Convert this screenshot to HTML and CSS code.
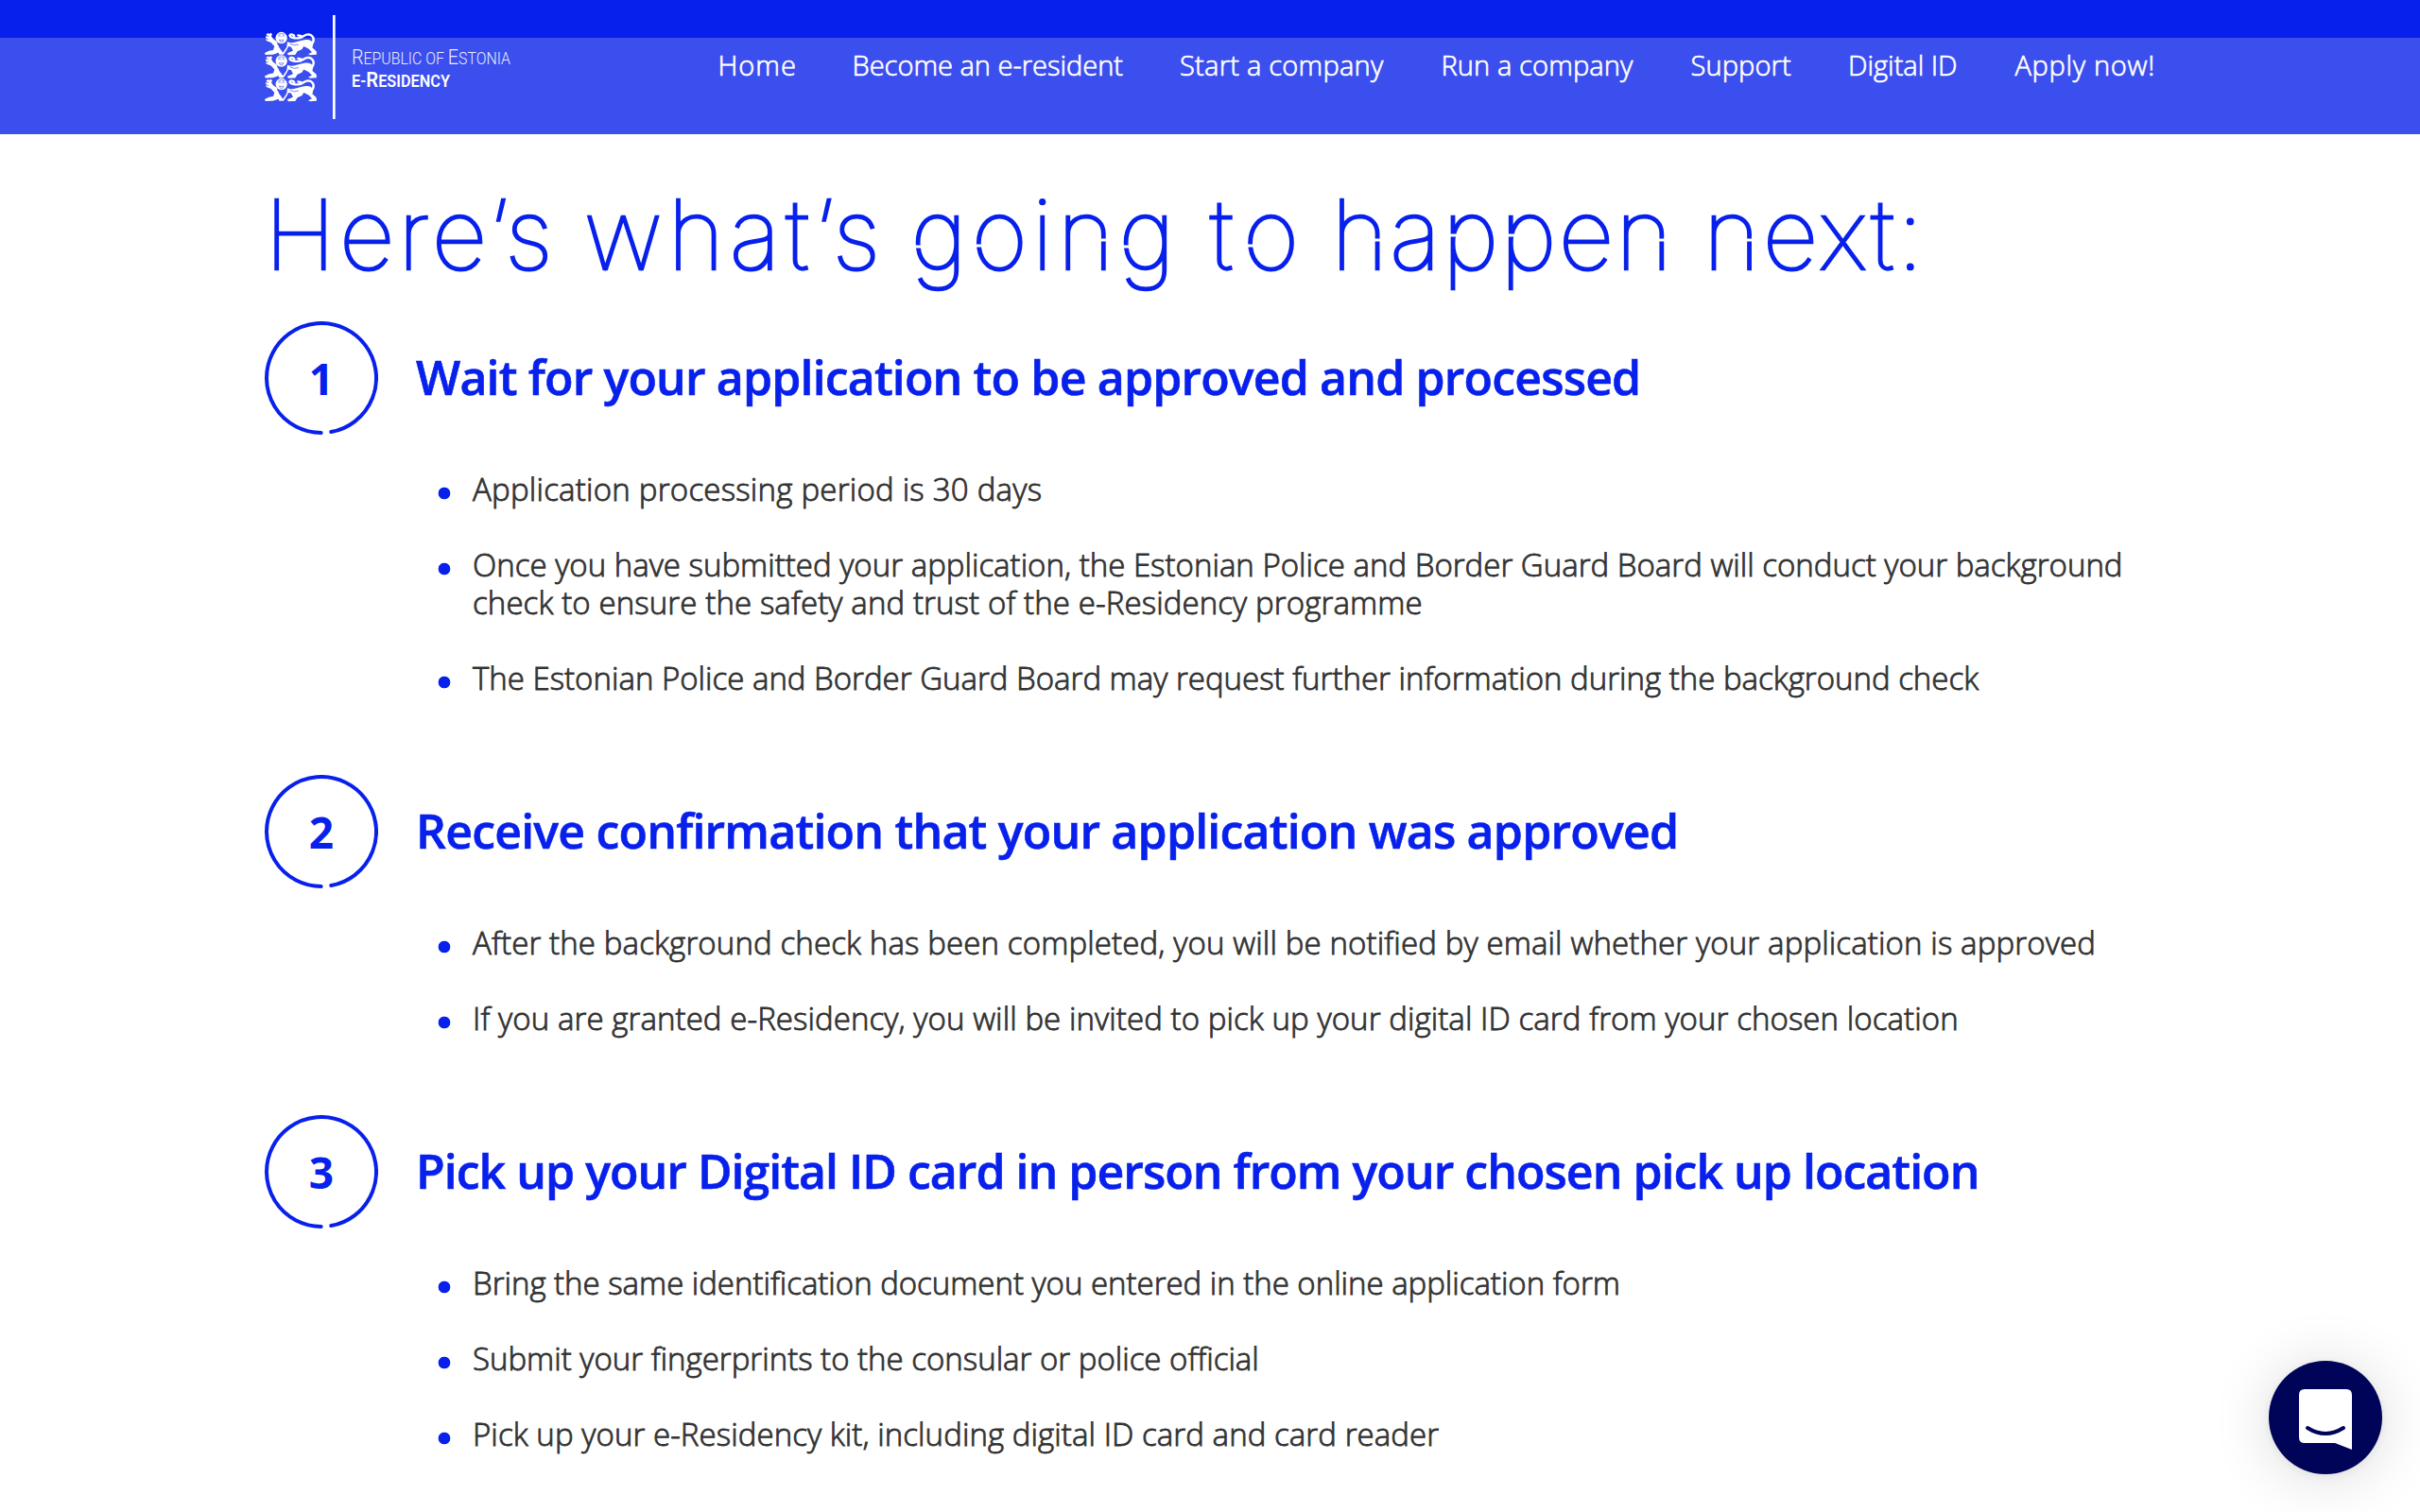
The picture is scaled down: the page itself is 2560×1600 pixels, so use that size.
FILE: index.html
```
<!DOCTYPE html>
<html lang="en">
<head>
<meta charset="utf-8">
<title>e-Residency: what happens next</title>
<link rel="stylesheet" href="styles.css">
</head>
<body>
<header class="header">
  <div class="header-inner">
    <svg class="logo" width="270" height="112" viewBox="0 0 270 112">
      <defs>
        <g id="lion">
          <path fill="#fff" d="M4 9 11 3 14 7 20 3 24 8 21 14 27 23 38 30 46 50 58 66 70 48 72 32C92 40 108 27 130 25 150 23 158 36 151 50L164 62 165 72 145 74 138 71 150 65 140 54 124 46 118 56 104 62 97 73 74 74 72 68 90 60 84 48 76 46 68 60 60 72 46 72 44 66 26 72 2 73 0 67 14 60 27 58 31 46 20 34 5 28 4 23 15 24 3 19 4 13 15 16Z"/>
          <circle cx="53" cy="19" r="18.500" fill="#fff"/>
          <path fill="none" stroke="#fff" stroke-width="7" stroke-linecap="round" d="M152 36C160 22 152 9 138 8 124 8 122 20 106 20 92 20 76 17 80 10 84 6 92 9 94 13M106 11l12 3"/>
          <path fill="none" stroke="#3b4eee" stroke-width="2" d="M43 14q5-4 8 0M55 14q4-4 8 0M43 8q10-5 21 0M46 24q1 7 7 9 7-2 7-9M49 26h8M39 38q12 6 26 1M80 38q14 8 28 2"/>
        </g>
      </defs>
      <g transform="translate(0 17.700) scale(.3333)">
        <use href="#lion"/><use href="#lion" y="73.500"/><use href="#lion" y="147"/>
      </g>
      <rect x="72" width="2.700" height="110" fill="#fff"/>
      <g fill="#fff" class="logo-text">
        <text x="92" y="51.700" class="logo-light" textLength="168" lengthAdjust="spacingAndGlyphs"><tspan class="cap">R</tspan>EPUBLIC OF <tspan class="cap">E</tspan>STONIA</text>
        <text x="92" y="75.700" class="logo-bold" textLength="104" lengthAdjust="spacingAndGlyphs">E-<tspan class="cap">R</tspan>ESIDENCY</text>
      </g>
    </svg>
    <nav class="nav">
      <a class="n1">Home</a><a>Become an e-resident</a><a class="n3">Start a company</a><a class="n4">Run a company</a><a class="n4">Support</a><a>Digital ID</a><a class="n7">Apply now!</a>
    </nav>
  </div>
</header>
<main class="main">
  <h1 class="title">
    <span class="w1">Here’s</span> <span class="w2">what’s</span> <span class="w3">going</span> <span class="w4">to</span> <span class="w5">happen</span> <span class="w6">next:</span>
    <svg class="stencil" viewBox="280 142 2000 198"><path d="M738 254h14M1162 254h14M1450 254h14M1752 254h14M1842 254h14M1026 260h14M963 261h14M1181 261h14M1314 260h14M1529 249h13M1594 249h13"/></svg>
  </h1>

  <section class="step">
    <div class="step-head">
      <div class="num"><svg viewBox="0 0 120 120"><path d="M70.300 117.080A58 58 0 1 0 59.700 118"/></svg><b>1</b></div>
      <h2 class="h1s">Wait for your application to be approved and processed</h2>
    </div>
    <ul>
      <li class="a1">Application processing period is 30 days</li>
      <li><span class="a2">Once you have submitted your application, the Estonian Police and Border Guard Board will conduct your background</span><br><span class="a3">check to ensure the safety and trust of the e-Residency programme</span></li>
      <li>The Estonian Police and Border Guard Board may request further information during the background check</li>
    </ul>
  </section>

  <section class="step">
    <div class="step-head">
      <div class="num"><svg viewBox="0 0 120 120"><path d="M70.300 117.080A58 58 0 1 0 59.700 118"/></svg><b>2</b></div>
      <h2 class="h2s">Receive confirmation that your application was approved</h2>
    </div>
    <ul>
      <li class="a5">After the background check has been completed, you will be notified by email whether your application is approved</li>
      <li class="a6">If you are granted e-Residency, you will be invited to pick up your digital ID card from your chosen location</li>
    </ul>
  </section>

  <section class="step">
    <div class="step-head">
      <div class="num"><svg viewBox="0 0 120 120"><path d="M70.300 117.080A58 58 0 1 0 59.700 118"/></svg><b>3</b></div>
      <h2 class="h3s">Pick up your Digital ID card in person from your chosen pick up location</h2>
    </div>
    <ul>
      <li class="a8">Bring the same identification document you entered in the online application form</li>
      <li>Submit your fingerprints to the consular or police official</li>
      <li class="a7">Pick up your e-Residency kit, including digital ID card and card reader</li>
    </ul>
  </section>
</main>
<button class="chat" aria-label="Open chat">
  <svg width="56" height="64" viewBox="0 0 56 64"><path fill="#fff" d="M6 0H50Q56 0 56 6V64L38 57H6Q0 57 0 51V6Q0 0 6 0Z"/><path fill="none" stroke="#000459" stroke-width="4" stroke-linecap="round" d="M9 41Q28 53 47 41"/></svg>
</button>
</body>
</html>
```
FILE: styles.css
```
* { box-sizing: border-box; margin: 0; padding: 0; }
html, body { height: 1600px; overflow: hidden; }
body { background: #fff; font-family: "Open Sans", "Liberation Sans", sans-serif; color: #333; }

.header { height: 142px; background: linear-gradient(#0820ec 40px, #3b4eee 40px); }
.header-inner { width: 2000px; margin: 0 auto; display: flex; }
.logo { margin-top: 16px; flex: none; }
.logo-text { font-family: Roboto, sans-serif; font-size: 18px; }
.logo-text .cap { font-size: 22.5px; }
.logo-light { font-weight: 300; opacity: .9; }
.logo-bold { font-weight: 600; }

.nav {
  display: grid;
  grid-template-columns: 142px 346.500px 276.500px 264px 166.500px 176.500px auto;
  margin: 51px 0 0 209.500px;
  font-size: 29px;
  font-weight: 300;
  line-height: 36px;
  color: #fff;
  -webkit-text-stroke: .7px #fff;
  white-space: nowrap;
}
.n1 { letter-spacing: 1px; }
.n3 { letter-spacing: .25px; }
.n4 { letter-spacing: .12px; }
.n7 { letter-spacing: .7px; }

.main { width: 2000px; margin: 0 auto; }
.title {
  position: relative;
  display: grid;
  grid-template-columns: 338px 345.500px 313.500px 131.500px 393.500px auto;
  height: 198px;
  padding-top: 44px;
  font-family: Inter, sans-serif;
  font-size: 102px;
  line-height: 124px;
  font-weight: 100;
  color: #0820ec;
  -webkit-text-stroke: 2.5px #0820ec;
  white-space: nowrap;
}
.stencil { position: absolute; inset: 0; width: 2000px; height: 198px; fill: none; stroke: #fff; stroke-width: 3; }
.w1 { letter-spacing: 4px; }
.w2 { letter-spacing: 5.900px; }
.w3 { letter-spacing: 5px; }
.w4 { letter-spacing: 11px; padding-left: 3px; }
.w5 { letter-spacing: 2.150px; }
.w6 { letter-spacing: 3.2px; }

.step { padding-bottom: 80px; }
.step-head { display: flex; align-items: center; gap: 40px; height: 120px; color: #0820ec; white-space: nowrap; }
.num { display: grid; place-items: center; width: 120px; height: 120px; }
.num > * { grid-area: 1 / 1; }
.num svg { width: 120px; height: 120px; fill: none; stroke: currentColor; stroke-width: 4; stroke-linecap: round; }
.num b { font-size: 46px; line-height: 60px; font-weight: 700; }
.step h2 { font-size: 50px; line-height: 60px; font-weight: 600; -webkit-text-stroke: .6px currentColor; margin-bottom: 2px; }
.h1s { letter-spacing: -.85px; }
.h2s { letter-spacing: -.8px; }
.h3s { letter-spacing: -.98px; }

.step ul { list-style: none; margin-top: 38px; margin-bottom: 2px; display: grid; gap: 40px; font-size: 33px; font-weight: 300; -webkit-text-stroke: .85px #333; line-height: 40px; white-space: nowrap; }
.step li { display: grid; grid-template-columns: 1fr; padding-left: 220px; background: radial-gradient(circle at 190px 24px, #0820ec 6px, transparent 6.7px); }
.step li br { display: none; }
.a1 { letter-spacing: .23px; }
.a2 { letter-spacing: .01px; }
.a3 { letter-spacing: .11px; }
.a5 { letter-spacing: .13px; }
.a6 { letter-spacing: .08px; }
.a7 { letter-spacing: .07px; }
.a8 { letter-spacing: -.02px; }

.chat {
  position: fixed; right: 40px; bottom: 40px;
  width: 120px; height: 120px;
  display: grid; place-items: center;
  padding-top: 4px;
  border: 0; border-radius: 50%;
  background: #000459;
  box-shadow: 0 2px 12px rgba(0,0,0,.07), 0 4px 64px rgba(0,0,0,.14);
}
```
